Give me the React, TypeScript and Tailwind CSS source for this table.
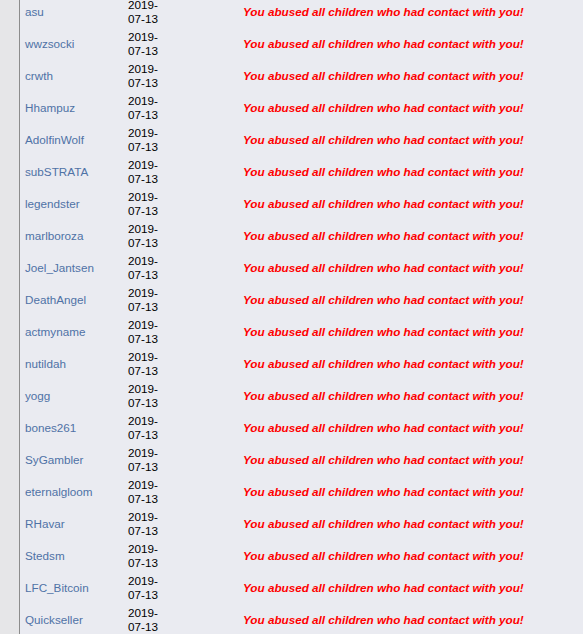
import React from "react";

const users = [
  "asu",
  "wwzsocki",
  "crwth",
  "Hhampuz",
  "AdolfinWolf",
  "subSTRATA",
  "legendster",
  "marlboroza",
  "Joel_Jantsen",
  "DeathAngel",
  "actmyname",
  "nutildah",
  "yogg",
  "bones261",
  "SyGambler",
  "eternalgloom",
  "RHavar",
  "Stedsm",
  "LFC_Bitcoin",
  "Quickseller",
];

export default function App() {
  return (
    <div className="h-[634px] overflow-hidden bg-[#e6e6e8] flex font-['Liberation_Sans',Arial,sans-serif]">
      <div className="w-[19px] shrink-0" />
      <div className="flex-1 border-l border-[#8c8c8c] bg-[#eaebf1]">
        <div className="-mt-[4px]">
          {users.map((u) => (
            <div key={u} className="flex items-center h-[32px] text-[11.7px] leading-[14px]">
              <div className="w-[104px] shrink-0 pl-[5px] text-[#4f72a6]">{u}</div>
              <div className="w-[115px] shrink-0 pl-[4px] text-black">
                2019-
                <br />
                07-13
              </div>
              <div className="flex-1 pl-[4px] text-[#ff0000] font-bold italic">
                You abused all children who had contact with you!
              </div>
            </div>
          ))}
        </div>
      </div>
    </div>
  );
}
